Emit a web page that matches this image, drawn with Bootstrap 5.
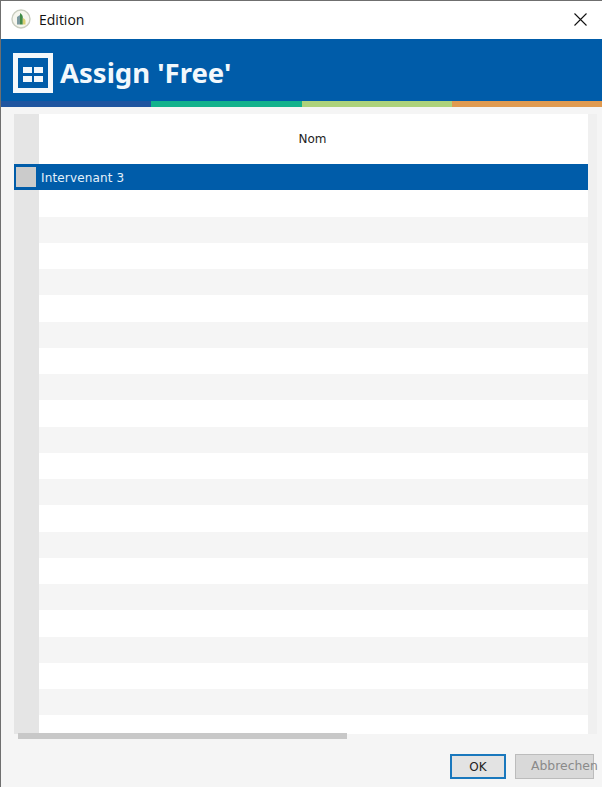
<!DOCTYPE html>
<html lang="fr">

<head>
    <meta charset="UTF-8">
    <meta name="viewport" content="width=device-width, initial-scale=1.0">
    <title>Edition</title>

    <link href="https://cdn.jsdelivr.net/npm/bootstrap@5.3.0/dist/css/bootstrap.min.css" rel="stylesheet">

    <style>
        html, body {
            height: 787px;
            overflow: hidden;
        }

        body {
            background-color: #f5f5f5;
            font-family: "DejaVu Sans", sans-serif;
            font-size: 12px;
            color: #222;
        }

        .fenetre {
            height: 787px;
            border-top: 1px solid #6f6f6f;
            border-left: 1px solid #6f6f6f;
            overflow: hidden;
        }

        .barre-titre {
            height: 38px;
            background: #fff;
            padding: 0 15px 2px 10px;
            font-family: "Open Sans", sans-serif;
            font-size: 14px;
            color: #111;
        }

        .entete {
            height: 62px;
            background: #005ca9;
            padding: 5px 0 0 12px;
            color: #f2f8fc;
            font-family: "Noto Sans", sans-serif;
            font-size: 27.5px;
            font-weight: 700;
        }

        .icone-entete {
            margin-right: 7px;
        }

        .bandes {
            height: 6px;
        }

        .bandes > div {
            flex: 1 1 0;
        }

        .grille {
            margin: 7px 5px 0 13px;
            height: 620px;
            overflow: hidden;
            background: #fff;
        }

        .ligne-entete {
            height: 50px;
            background: #fff;
        }

        .cellule-coin {
            width: 25px;
            background: #e5e5e5;
            flex: none;
        }

        .ligne {
            height: 26.25px;
            background: #fff;
        }

        .ligne:nth-child(odd) {
            background: #f5f5f5;
        }

        .ligne.choisie {
            background: #005ca9;
            color: #e4f1fb;
        }

        .ligne.choisie .cellule-coin {
            background: #005ca9;
            padding: 3px 2px;
        }

        .ligne.choisie .cellule-coin div {
            height: 100%;
            width: 20px;
            background: #cbcbcb;
        }

        .bord-droit {
            width: 9px;
            background: #f0f0f0;
            flex: none;
        }

        .nom-colonne {
            padding-right: 2px;
        }

        .valeur {
            padding: 1px 0 0 2px;
            letter-spacing: .15px;
        }

        .zone-ascenseur {
            height: 6px;
            margin: -1px 0 0 17px;
        }

        .ascenseur {
            width: 329px;
            height: 6px;
            background: #c8c8c8;
        }

        .pied {
            padding: 15px 8px 0 0;
            gap: 9px;
        }

        .btn-ok, .btn-annuler {
            height: 25px;
            padding: 0;
            border-radius: 0;
            font-family: "DejaVu Sans", sans-serif;
            font-size: 12px;
            line-height: 1;
        }

        .btn-ok {
            width: 56px;
            background: #e3e3e3;
            border: 2px solid #1a78bd;
            color: #222;
        }

        .btn-annuler {
            width: 79px;
            padding-left: 15px;
            background: #d9d9d9;
            border: 1px solid #bcbcbc;
            color: #8a8a8a;
            font-size: 12.4px;
            text-align: left;
            white-space: nowrap;
        }
    </style>
</head>

<body>
    <div class="fenetre d-flex flex-column">
        <!-- Barre de titre -->
        <div class="barre-titre d-flex align-items-center">
            <svg width="20" height="20" viewBox="0 0 20 20" class="me-1">
                <circle cx="10" cy="10" r="9" fill="#f6f6ee" stroke="#c9cdbf" stroke-width="1.400" />
                <path d="M6 15.500V8l3-2v9.500z" fill="#7d9aa0" />
                <path d="M9 15.500V4c2 1 2.800 2.800 2.800 4.500v7z" fill="#3f8a45" />
                <path d="M11.800 15.500V9c1.700.5 2.700 1.500 2.700 3v3.500z" fill="#d9cf72" />
            </svg>
            <span class="ms-1">Edition</span>
            <svg width="13" height="13" viewBox="0 0 13 13" class="ms-auto">
                <path d="M.5.500l12 12M12.500.500l-12 12" stroke="#111" stroke-width="1.100" fill="none" />
            </svg>
        </div>

        <!-- Entete bleu -->
        <div class="entete d-flex align-items-center">
            <svg width="40" height="40" viewBox="0 0 40 40" class="icone-entete">
                <rect x="0" y="0" width="40" height="40" fill="#f4f8fb" />
                <rect x="5" y="5" width="30" height="30" fill="#005ca9" />
                <rect x="10" y="14" width="9" height="6" fill="#f4f8fb" />
                <rect x="21" y="14" width="9" height="6" fill="#f4f8fb" />
                <rect x="10" y="23" width="9" height="6" fill="#f4f8fb" />
                <rect x="21" y="23" width="9" height="6" fill="#f4f8fb" />
            </svg>
            <span>Assign 'Free'</span>
        </div>
        <div class="bandes d-flex">
            <div style="background:#1f55a0"></div>
            <div style="background:#12b28c"></div>
            <div style="background:#add27b"></div>
            <div style="background:#e09a50"></div>
        </div>

        <!-- Grille -->
        <div class="grille d-flex">
            <div class="flex-grow-1">
                <div class="ligne-entete d-flex">
                    <div class="cellule-coin"></div>
                    <div class="nom-colonne flex-grow-1 d-flex align-items-center justify-content-center">Nom</div>
                </div>
                <div id="lignes"></div>
            </div>
            <div class="bord-droit"></div>
        </div>
        <div class="zone-ascenseur">
            <div class="ascenseur"></div>
        </div>

        <!-- Boutons -->
        <div class="pied d-flex justify-content-end">
            <button type="button" class="btn btn-ok">OK</button>
            <button type="button" class="btn btn-annuler">Abbrechen</button>
        </div>
    </div>

    <script>
        // 22 lignes, seule la premiere est remplie
        const lignes = document.getElementById('lignes');
        for (let i = 0; i < 22; i++) {
            const ligne = document.createElement('div');
            ligne.classList.add('ligne', 'd-flex', 'align-items-center');
            const coin = document.createElement('div');
            coin.classList.add('cellule-coin', 'align-self-stretch');
            ligne.appendChild(coin);
            if (i === 0) {
                ligne.classList.add('choisie');
                coin.appendChild(document.createElement('div'));
                const valeur = document.createElement('div');
                valeur.classList.add('valeur');
                valeur.textContent = 'Intervenant 3';
                ligne.appendChild(valeur);
            }
            lignes.appendChild(ligne);
        }
    </script>

    <script src="https://cdn.jsdelivr.net/npm/bootstrap@5.3.0/dist/js/bootstrap.bundle.min.js"></script>
</body>

</html>
